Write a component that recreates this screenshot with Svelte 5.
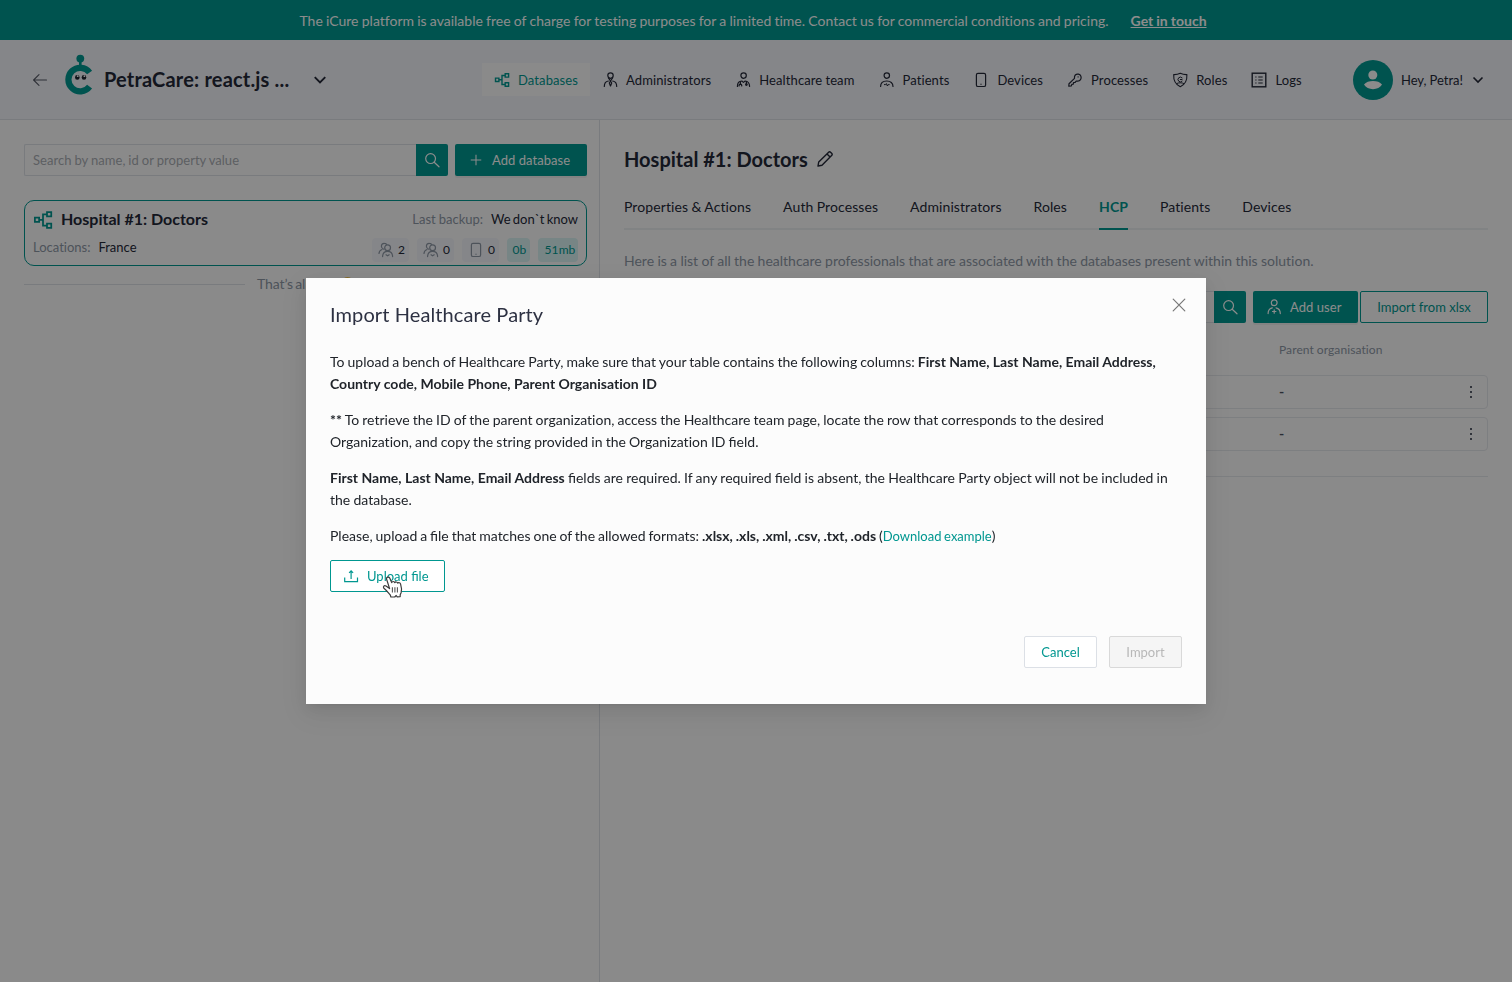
<script>
  const nav = [
    { icon: 'db', label: 'Databases', active: true },
    { icon: 'admin', label: 'Administrators' },
    { icon: 'team', label: 'Healthcare team' },
    { icon: 'patient', label: 'Patients' },
    { icon: 'device', label: 'Devices' },
    { icon: 'key', label: 'Processes' },
    { icon: 'shield', label: 'Roles' },
    { icon: 'logs', label: 'Logs' }
  ];
  const tabs = ['Properties & Actions', 'Auth Processes', 'Administrators', 'Roles', 'HCP', 'Patients', 'Devices'];
  const stats = [
    { icon: 'users', value: '2' },
    { icon: 'users', value: '0' },
    { icon: 'device', value: '0' }
  ];
</script>

{#snippet icon(name, size = 16)}
  <svg class="icon" width={size} height={size} viewBox="0 0 16 16" fill="none" stroke="currentColor" stroke-width="1.2" stroke-linecap="round" stroke-linejoin="round">
    {#if name === 'db'}
      <path stroke-width="1.4" stroke-linejoin="miter" d="M1.5 6.100h3.400v3.400H1.500zM11.200 1.700h3.400v3.400h-3.400zM11.200 10.800h3.400v3.400h-3.400zM4.900 7.800H8M11.200 3.500H8v9h3.200" />
    {:else if name === 'admin'}
      <circle cx="8.500" cy="3.600" r="2.700" /><path d="M6.400 5.800 8.500 9l2.100-3.200M2.300 14.400c0-3.200 1.600-5 4-5.400M14.700 14.400c0-3.200-1.600-5-4-5.400M8.500 9l-1.200 2L8.500 14l1.200-3z" />
    {:else if name === 'team'}
      <circle cx="8.600" cy="3.600" r="2.700" /><path d="M2.400 14.400c0-3.400 2-5.300 4.400-5.400l1.600 1.400L10.200 9c2.600.2 4.200 2 4.400 5.400M5.400 10v2.400M4 14l.4-1.600h2l.4 1.600M11.400 9.800v2" /><circle cx="11.400" cy="12.600" r=".8" />
    {:else if name === 'patient'}
      <circle cx="8.800" cy="3.600" r="2.700" /><path d="M2.600 14.400c0-3.400 2.400-5.400 6.200-5.400s6.200 2 6.200 5.400" /><path stroke-width="1" d="M6.400 12.600h1.200l.8-1 1 2.400.8-1.400h1" />
    {:else if name === 'device'}
      <rect x="3.400" y="1.300" width="9.200" height="13.200" rx="1.600" /><path d="M8 12.200v.1" />
    {:else if name === 'key'}
      <path d="M8.300 3a3.500 3.500 0 1 1 2.400 6.100l-1.500.1-1.200 1.300-1.500.2-.2 1.500-1.500.2-.4 1.400-2.600.3.2-2.300 5.500-5.400c-.2-1.300 0-2.500.8-3.400z" /><path d="M11.100 4.800v.1" />
    {:else if name === 'shield'}
      <path stroke-width="1.100" d="M8.300 1.200c2 1 4.200 1.500 6.600 1.400.3 5.400-1.600 9.800-6.600 12.200C3.300 12.400 1.400 8 1.700 2.600c2.400.1 4.600-.4 6.600-1.400z" /><path stroke-width="1" d="M10.100 5.800a2.400 2.400 0 1 0 0 3.400M10 7.500H8.300M4.800 11.500c2-1 5-1 7 0" />
    {:else if name === 'logs'}
      <rect x="1.200" y="1.200" width="13.600" height="13.600" stroke-width="1.400" stroke-linejoin="miter" /><path stroke-linecap="butt" d="M4.300 5h1.200M4.300 8h1.200M4.300 11h1.200M7.300 5h4.400M7.300 8h4.400M7.300 11h4.400" />
    {:else if name === 'users'}
      <circle cx="9.600" cy="5.800" r="2.900" /><path d="M4.600 14.600c.1-3.400 1.900-5.300 5-5.300s4.900 1.900 5 5.300M5.700 7.200C4 6.600 3.300 5.400 3.400 4 3.600 2.200 5 1.200 6.500 1.300c.9 0 1.600.4 2.100 1M1 11.500c.1-2 1-3.400 3-4M8 12.800l1.600 1 1.600-1" />
    {:else if name === 'adduser'}
      <circle cx="8.200" cy="3.800" r="2.900" /><path d="M2.100 14.600c0-3.200 1.500-5.200 4.300-5.800M14.300 14.600c0-3.200-1.500-5.200-4.300-5.800M8.200 10.800v3.400M6.500 12.500h3.400" />
    {:else if name === 'search'}
      <circle cx="6.600" cy="6.600" r="4.900" /><path d="m10.200 10.200 4.800 4.600" />
    {:else if name === 'plus'}
      <path stroke-linecap="butt" d="M8 2v12M2 8h12" />
    {:else if name === 'pencil'}
      <path stroke-width="1.400" d="m1 15 .7-4L11.400 1.400a1.700 1.700 0 0 1 2.400 0l.8.800a1.700 1.700 0 0 1 0 2.400L5 14.200zM10 2.900 13.100 6" />
    {:else if name === 'upload'}
      <path stroke-linecap="butt" stroke-linejoin="miter" d="M1.700 9.500v4.100h12.800V9.500M8.100 11V3M6.100 4.900l2-2 2 2" />
    {:else if name === 'back'}
      <path stroke-width="1.100" d="M14.500 8H1.800M7 2.700 1.600 8 7 13.300" />
    {:else if name === 'down'}
      <path stroke-width="2.200" stroke-linecap="butt" stroke-linejoin="miter" d="m2 4.700 6 6 6-6" />
    {:else if name === 'close'}
      <path stroke-width="1.200" d="m2.200 2.200 11.600 11.600M13.800 2.200 2.200 13.800" />
    {/if}
  </svg>
{/snippet}

<div class="page">
  <div class="banner">
    <span>The iCure platform is available free of charge for testing purposes for a limited time. Contact us for commercial conditions and pricing.</span>
    <a href="#contact">Get in touch</a>
  </div>

  <header>
    <span class="back">{@render icon('back', 16)}</span>
    <svg class="logo" width="32" height="42" viewBox="0 0 32 42">
      <circle cx="16.300" cy="4.600" r="3.900" fill="#009790" />
      <path d="M16.300 7v7" stroke="#009790" stroke-width="2.600" />
      <path d="M25.600 18.500A11.800 11.800 0 1 0 25.600 32.700" fill="none" stroke="#009790" stroke-width="6.200" />
      <circle cx="13.300" cy="23.400" r="2.300" fill="#20242f" /><circle cx="20" cy="23.400" r="2.300" fill="#20242f" />
      <circle cx="13.700" cy="22.200" r=".9" fill="#fff" /><circle cx="20.400" cy="22.200" r=".9" fill="#fff" />
    </svg>
    <h1>PetraCare: react.js ...</h1>
    <span class="chev">{@render icon('down', 14)}</span>
    <nav>
      {#each nav as item}
        <a href="#nav" class:active={item.active}>{@render icon(item.icon)}<span>{item.label}</span></a>
      {/each}
    </nav>
    <div class="user">
      <svg width="40" height="40" viewBox="0 0 40 40">
        <circle cx="20" cy="20" r="20" fill="#009790" />
        <circle cx="19.800" cy="15" r="4.500" fill="#fdfdfd" />
        <path d="M11 24.600c2-2.500 5.200-3.600 9-3.600s7 1.100 9 3.600c-1.800 3.100-5 4.600-9 4.600s-7.200-1.500-9-4.600z" fill="#fdfdfd" />
      </svg>
      <span class="hey">Hey, Petra!</span>
      {@render icon('down', 12)}
    </div>
  </header>

  <main>
    <section class="left">
      <div class="bar">
        <div class="input">Search by name, id or property value</div>
        <button class="sq">{@render icon('search')}</button>
        <button class="solid addb">{@render icon('plus', 14)}<span>Add database</span></button>
      </div>
      <div class="card">
        <div class="row top">
          <span class="dbi">{@render icon('db', 20)}</span>
          <h3>Hospital #1: Doctors</h3>
          <span class="muted">Last backup:</span><span class="val know">We don`t know</span>
        </div>
        <div class="row">
          <span class="muted loc">Locations:</span><span class="val">France</span>
          <div class="stats">
            {#each stats as s}
              <span class="stat">{@render icon(s.icon)}{s.value}</span>
            {/each}
            <span class="stat teal b0">0b</span>
            <span class="stat teal b51">51mb</span>
          </div>
        </div>
      </div>
      <div class="end"><i></i><span>That’s all</span><b class="dot"></b><i></i></div>
    </section>

    <section class="right">
      <div class="title"><h2>Hospital #1: Doctors</h2>{@render icon('pencil')}</div>
      <div class="tabs">
        {#each tabs as t}<span class:on={t === 'HCP'}>{t}</span>{/each}
      </div>
      <p class="desc">Here is a list of all the healthcare professionals that are associated with the databases present within this solution.</p>
      <div class="bar tools">
        <div class="input"></div>
        <button class="sq">{@render icon('search')}</button>
        <button class="solid addu">{@render icon('adduser')}<span>Add user</span></button>
        <button class="ghost">Import from xlsx</button>
      </div>
      <div class="thead">Parent organisation</div>
      {#each [1, 2] as r (r)}
        <div class="trow"><span class="dash">-</span><span class="dots"><i></i><i></i><i></i></span></div>
      {/each}
      <hr />
    </section>
  </main>
</div>

<div class="mask"></div>

<div class="modal" role="dialog" aria-modal="true">
  <div class="close">{@render icon('close')}</div>
  <h2 class="mt">Import Healthcare Party</h2>
  <p class="intro">To upload a bench of Healthcare Party, make sure that your table contains the following columns: <strong>First Name, Last Name, Email Address,<br />Country code, Mobile Phone, Parent Organisation ID</strong></p>
  <p><strong>**</strong> To retrieve the ID of the parent organization, access the Healthcare team page, locate the row that corresponds to the desired<br />Organization, and copy the string provided in the Organization ID <span class="lig">field.</span></p>
  <p class="lig required"><strong>First Name, Last Name, Email Address</strong> fields are required. If any required field is absent, the Healthcare Party object will not be included in<br />the database.</p>
  <p class="lig formats">Please, upload a file that matches one of the allowed formats: <strong class="ext">.xlsx, .xls, .xml, .csv, .txt, .ods</strong> (<a href="#example">Download example</a>)</p>
  <button class="upload lig">{@render icon('upload')}<span>Upload file</span></button>
  <div class="foot">
    <button class="cancel">Cancel</button>
    <button class="import" disabled>Import</button>
  </div>
  <svg class="cursor" width="21" height="23" viewBox="0 0 21 23">
    <path d="M7.600 13.600 4.600 4.300C4 2.200 6.700 1.100 7.700 3.100l2 4.500c.4-1.500 2.600-1.500 3 .1.700-1.200 2.600-.9 3 .5.9-.9 2.500-.5 2.900.9.900 2.900 1.400 5.800.5 8.600l-.9 2v1.900l-3 .2-1-1.300-1.500 1.500H8.900l-.7-2.200C6.400 17.800 4.300 15.200 1.900 13.300.7 11.700 2.200 10 4 11z" fill="#fff" stroke="#3a3a3a" stroke-width="1.200" stroke-linejoin="round" />
    <path d="M10.400 12.300v5.200M12.900 12.300v5.200M15.400 12.300v5.200" stroke="#555" stroke-width="1.100" />
  </svg>
</div>

<style>
  :global(body) { margin: 0; background: #fcfcfc; overflow: hidden; }
  .page, .modal { font-family: Lato, sans-serif; font-size: 14px; line-height: 22px; color: #242838; font-variant-ligatures: none; word-spacing: -.36px; }
  .lig { font-variant-ligatures: normal; }
  * { box-sizing: border-box; }
  a { text-decoration: none; color: inherit; }
  h1, h2, h3, p { margin: 0; word-spacing: 0; }
  strong { word-spacing: 0; }
  button { font: inherit; padding: 0; border: 0; border-radius: 2px; display: flex; align-items: center; }
  .icon { display: block; flex: none; }
  .page { height: 982px; display: flex; flex-direction: column; background: #fcfcfc; white-space: nowrap; }
  .banner { height: 40px; flex: none; background: #009790; color: #fff; display: flex; justify-content: center; align-items: center; gap: 22px; padding-top: 2px; padding-right: 6px; }
  .banner a { font-weight: 700; text-decoration: underline; }
  header { height: 80px; flex: none; background: #f3f4f9; border-bottom: 1px solid #dce0e6; display: flex; align-items: center; padding: 0 28px 0 32px; }
  .back { color: #555a66; }
  .logo { margin: -10px 0 0 16px; flex: none; }
  h1 { font-size: 20px; font-weight: 700; margin: -2px 0 0 8px; width: 186px; letter-spacing: .18px; }
  .chev { margin-left: 23px; }
  nav { display: flex; margin-left: 155px; letter-spacing: .105px; }
  nav a { height: 33px; padding: 0 12px; display: flex; align-items: center; gap: 8px; font-size: 13px; }
  nav a.active { background: #fcfcfc; color: #009790; }
  .user { margin-left: auto; display: flex; align-items: center; font-size: 13px; }
  .hey { margin: 0 9px 0 8px; }
  main { flex: 1; display: flex; min-height: 0; }
  .left { width: 600px; border-right: 1px solid #dce0e6; padding: 24px 12px 0 24px; }
  .right { flex: 1; padding: 27px 24px 0 24px; }
  .bar { display: flex; height: 32px; font-size: 13px; }
  .input { flex: 1; border: 1px solid #dce0e6; border-right: 0; border-radius: 2px 0 0 2px; padding-left: 8px; line-height: 30px; color: #a9adb3; }
  .left .input { letter-spacing: .03px; }
  .sq { width: 32px; background: #009790; color: #fff; justify-content: center; border-radius: 0 2px 2px 0; }
  .solid { background: #009790; color: #fff; margin-left: 7px; box-shadow: 0 2px 0 rgba(0, 0, 0, .05); letter-spacing: .05px; }
  .addb { width: 132px; padding-left: 14px; gap: 9px; }
  .addu { width: 105px; padding-left: 13px; gap: 8px; }
  .ghost { width: 128px; margin-left: 2px; border: 1px solid #009790; background: none; color: #009790; justify-content: center; }
  .card { margin-top: 24px; height: 66px; border: 1px solid #009790; border-radius: 10px; padding: 6px 8px; font-size: 13px; }
  .row { display: flex; align-items: center; height: 24px; }
  .row + .row { margin-top: 4px; }
  .dbi { color: #009790; margin-top: 1px; }
  h3 { font-size: 16px; font-weight: 700; margin: 0 auto 0 8px; }
  .muted { color: #8d97a5; }
  .val { margin-left: 8px; }
  .know { word-spacing: -1.200px; }
  .stats { display: flex; gap: 8px; margin-left: auto; padding-top: 5px; }
  .stat { height: 24px; width: 37px; background: #f3f4f9; border-radius: 4px; display: flex; align-items: center; justify-content: flex-end; gap: 4px; padding-right: 4px; font-size: 12px; }
  .stat .icon { color: #8d97a5; }
  .teal { background: #d9f3f2; color: #009790; justify-content: center; padding: 0 0 0 2px; letter-spacing: .1px; }
  .b0 { width: 23px; }
  .b51 { width: 40px; padding-left: 4px; }
  .end { display: flex; align-items: center; margin-top: 7px; color: #8d97a5; font-size: 14px; }
  .end i { flex: 1; height: 1px; background: #dce0e6; }
  .end span { width: 84px; margin-left: 12px; word-spacing: -1.200px; letter-spacing: -.1px; }
  .dot { width: 13px; height: 15px; border-radius: 7px; background: #f5c242; margin-right: 12px; }
  .title { display: flex; align-items: center; gap: 9px; height: 24px; }
  .title h2 { font-size: 20px; font-weight: 700; }
  .tabs { display: flex; gap: 32px; margin-top: 13px; height: 46px; border-bottom: 2px solid #eceef1; letter-spacing: .09px; }
  .tabs span { height: 46px; line-height: 46px; }
  .tabs .on { color: #009790; font-weight: 700; border-bottom: 2px solid #009790; }
  .desc { margin-top: 20px; color: #8d97a5; word-spacing: -.27px; }
  .tools { margin-top: 19px; }
  .thead { margin: 16px 0 0 655px; font-size: 12px; color: #8d97a5; letter-spacing: .1px; }
  .trow { height: 34px; border: 1px solid #e4e7eb; border-radius: 4px; display: flex; justify-content: space-between; align-items: center; padding: 0 15px 0 654px; margin-bottom: 8px; }
  .thead + .trow { margin-top: 14px; }
  .dash { font-weight: 700; color: #4b5262; }
  .dots { display: flex; flex-direction: column; gap: 3px; }
  .dots i { width: 2px; height: 2px; background: #5a5f6c; }
  hr { border: 0; height: 1px; background: #e4e7eb; margin: 25px 0 0; }
  .mask { position: fixed; inset: 0; background: rgba(0, 0, 0, .45); }
  .modal { position: fixed; left: 306px; top: 278px; width: 900px; height: 426px; background: #fcfcfc; padding: 24px; color: #20242a; white-space: nowrap; box-shadow: 0 3px 6px -4px rgba(0, 0, 0, .12), 0 6px 16px rgba(0, 0, 0, .08), 0 9px 28px 8px rgba(0, 0, 0, .05); }
  .close { position: absolute; right: 19px; top: 19px; color: #777; }
  .mt { font-size: 20px; font-weight: 400; line-height: 24px; color: #2d3142; margin-bottom: 25px; letter-spacing: .1px; }
  .modal p { margin-bottom: 14px; word-spacing: -.44px; }
  .modal .intro { word-spacing: -.52px; }
  .modal .required { word-spacing: -.34px; }
  .modal .formats { word-spacing: -.68px; }
  .modal strong { word-spacing: 0; }
  .modal .ext { word-spacing: -.5px; }
  .modal p a, .upload, .cancel { color: #009790; }
  .modal p a { font-size: 13px; }
  .upload { width: 115px; height: 32px; margin-top: -1px; border: 1px solid #009790; background: #fff; padding-left: 12px; gap: 8px; font-size: 13px; }
  .foot { display: flex; justify-content: flex-end; gap: 12px; margin-top: 44px; font-size: 13px; }
  .foot button { width: 73px; height: 32px; justify-content: center; border: 1px solid #dce0e6; background: #fff; }
  .foot .import { background: #f5f5f5; border-color: #d9d9d9; color: #b8b8b8; }
  .cursor { position: absolute; left: 76px; top: 297px; }
</style>
